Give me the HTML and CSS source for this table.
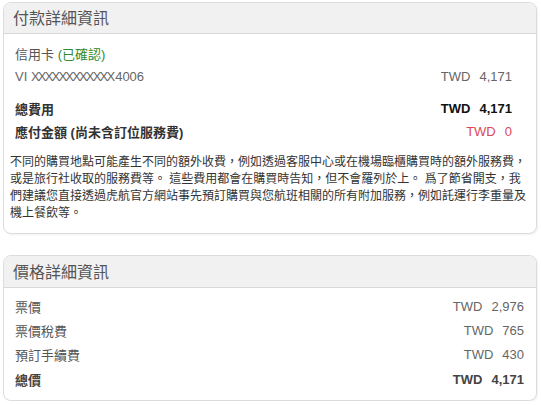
FILE: index.html
```html
<!DOCTYPE html>
<html lang="zh-Hant">
<head>
  <meta charset="UTF-8" />
  <title>付款詳細資訊</title>
  <link rel="stylesheet" href="styles.css">
</head>
<body>
  <!-- Payment details -->
  <div class="box payment">
    <div class="box-head">付款詳細資訊</div>
    <div class="box-body">
      <div class="row">
        <span>信用卡 <span class="ok">(已確認)</span></span>
      </div>
      <div class="row">
        <span class="card-no">VI <span class="masked">XXXXXXXXXXXX</span>4006</span>
        <span class="amount">TWD<span class="num">4,171</span></span>
      </div>
      <div class="row total">
        <span>總費用</span>
        <span class="amount">TWD<span class="num">4,171</span></span>
      </div>
      <div class="row due">
        <span>應付金額 (尚未含訂位服務費)</span>
        <span class="amount">TWD<span class="num">0</span></span>
      </div>
      <p class="note">不同的購買地點可能產生不同的額外收費，例如透過客服中心或在機場臨櫃購買時的額外服務費，或是旅行社收取的服務費等。 這些費用都會在購買時告知，但不會羅列於上。 爲了節省開支，我們建議您直接透過虎航官方網站事先預訂購買與您航班相關的所有附加服務，例如託運行李重量及機上餐飲等。</p>
    </div>
  </div>

  <!-- Price details -->
  <div class="box price">
    <div class="box-head">價格詳細資訊</div>
    <div class="box-body">
      <div class="row">
        <span>票價</span>
        <span class="amount">TWD<span class="num">2,976</span></span>
      </div>
      <div class="row">
        <span>票價稅費</span>
        <span class="amount">TWD<span class="num">765</span></span>
      </div>
      <div class="row">
        <span>預訂手續費</span>
        <span class="amount">TWD<span class="num">430</span></span>
      </div>
      <div class="row total">
        <span>總價</span>
        <span class="amount">TWD<span class="num">4,171</span></span>
      </div>
    </div>
  </div>
</body>
</html>
```

FILE: styles.css
```css
* { box-sizing: border-box; }
body {
  font-family: "Liberation Sans", "Noto Sans CJK TC", sans-serif;
  font-size: 13px;
  color: #555;
  background: #fff;
  margin: 0;
  padding: 2px 4px 0 3px;
}
.box {
  border: 1px solid #dcdcdc;
  border-radius: 8px;
  box-shadow: 1px 1px 2px rgba(0,0,0,0.06);
  overflow: hidden;
  background: #fff;
}
.box + .box { margin-top: 21px; }
.box-head {
  background: #f1f1f1;
  border-bottom: 1px solid #d8d8d8;
  font-size: 16px;
  color: #555;
  height: 31px;
  padding: 6px 9px 0;
  line-height: 20px;
}
.price .box-head { height: 32px; padding-top: 7px; }

.box-body { padding: 8px 12px 11px 11px; }
.price .box-body { padding: 6px 12px 9px 11px; }

.row {
  display: flex;
  justify-content: space-between;
  align-items: center;
  height: 23px;
}
.price .row { height: 24.3px; }
.payment .row { padding-right: 12px; }
.payment .total { margin-top: 9px; }

.ok { color: #2e8b2e; }
.card-no { color: #666; }
.masked { letter-spacing: -1.8px; margin-right: 1.8px; }

.amount { color: #666; }
.num { margin-left: 9px; }

.total { font-weight: bold; color: #333; }
.total .amount { color: #111; }
.price .total { color: #444; }
.price .total .amount { color: #444; }
.due { font-weight: bold; color: #333; }
.due .amount { font-weight: normal; color: #d9475a; }

.note {
  margin: 11px -4px 0 -5px;
  font-size: 12px;
  line-height: 17px;
  color: #333;
}
```
